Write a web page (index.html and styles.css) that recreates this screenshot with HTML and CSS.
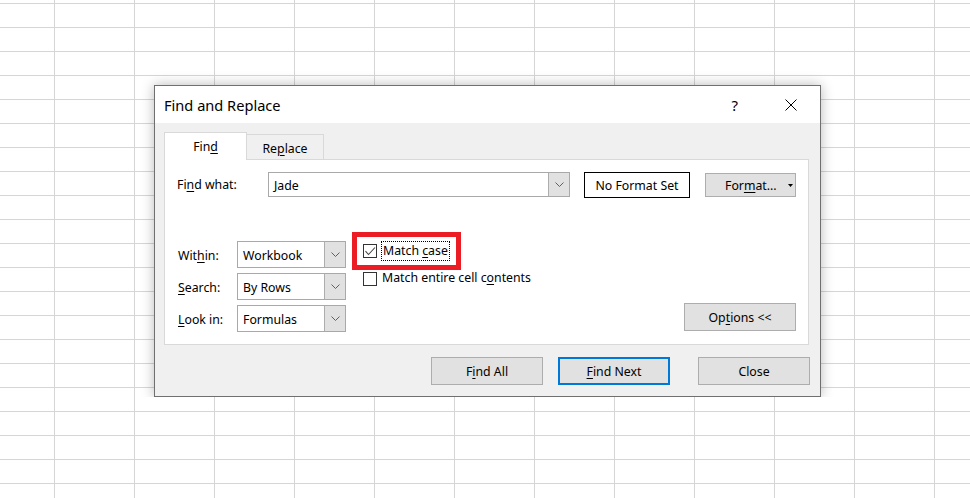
FILE: index.html
```html
<!DOCTYPE html>
<html>
<head>
<meta charset="utf-8">
<link rel="stylesheet" href="styles.css">
</head>
<body>
<div class="dialog">
  <div class="titlebar">
    <span class="title">Find and Replace</span>
    <span class="help">?</span>
    <svg class="close-x" width="12" height="12" viewBox="0 0 12 12"><path d="M0.5 0.5 L11.5 11.5 M11.5 0.5 L0.5 11.5" stroke="#000" stroke-width="1" fill="none"/></svg>
  </div>
  <div class="body">
    <div class="tabs">
      <div class="tab active"><span>Fin<u>d</u></span></div>
      <div class="tab"><span>Re<u>p</u>lace</span></div>
    </div>
    <div class="panel">
      <div class="row-find">
        <label class="lbl-find"><span>Fi<u>n</u>d what:</span></label>
        <div class="combo combo-find">
          <span class="combo-text">Jade</span>
          <span class="combo-arrow"><svg width="9" height="5" viewBox="0 0 9 5"><polyline points="0.5,0.5 4.5,4.5 8.5,0.5" stroke="#606060" fill="none"/></svg></span>
        </div>
        <div class="noformat">No Format Set</div>
        <div class="btn btn-format"><span>For<u>m</u>at...</span><svg class="tri" width="5" height="3" viewBox="0 0 5 3"><polygon points="0,0 5,0 2.5,3" fill="#000"/></svg></div>
      </div>
      <div class="row-opts">
        <div class="selects">
          <div class="sel-row">
            <label class="lbl-sel">Wit<u>h</u>in:</label>
            <div class="combo combo-sel">
              <span class="combo-text">Workbook</span>
              <span class="combo-arrow"><svg width="9" height="5" viewBox="0 0 9 5"><polyline points="0.5,0.5 4.5,4.5 8.5,0.5" stroke="#606060" fill="none"/></svg></span>
            </div>
          </div>
          <div class="sel-row">
            <label class="lbl-sel"><u>S</u>earch:</label>
            <div class="combo combo-sel">
              <span class="combo-text">By Rows</span>
              <span class="combo-arrow"><svg width="9" height="5" viewBox="0 0 9 5"><polyline points="0.5,0.5 4.5,4.5 8.5,0.5" stroke="#606060" fill="none"/></svg></span>
            </div>
          </div>
          <div class="sel-row">
            <label class="lbl-sel"><u>L</u>ook in:</label>
            <div class="combo combo-sel">
              <span class="combo-text">Formulas</span>
              <span class="combo-arrow"><svg width="9" height="5" viewBox="0 0 9 5"><polyline points="0.5,0.5 4.5,4.5 8.5,0.5" stroke="#606060" fill="none"/></svg></span>
            </div>
          </div>
        </div>
        <div class="checks">
          <div class="highlight">
            <div class="check-row">
              <span class="box"><svg width="12" height="12" viewBox="0 0 12 12"><polyline points="1.5,6.2 4.5,9.5 11,2.5" stroke="#444" stroke-width="1.1" fill="none"/></svg></span>
              <span class="check-label focus">Match <u>c</u>ase</span>
            </div>
          </div>
          <div class="check-row second">
            <span class="box"></span>
            <span class="check-label">Match entire cell c<u>o</u>ntents</span>
          </div>
        </div>
        <div class="btn btn-options"><span>Op<u>t</u>ions &lt;&lt;</span></div>
      </div>
    </div>
    <div class="buttons">
      <div class="btn btn-main"><span>F<u>i</u>nd All</span></div>
      <div class="btn btn-main default"><span><u>F</u>ind Next</span></div>
      <div class="btn btn-main btn-close">Close</div>
    </div>
  </div>
</div>
</body>
</html>
```
FILE: styles.css
```css
html {
  background-color: #ffffff;
  background-image:
    linear-gradient(to right, #d6d6d6 1px, transparent 1px),
    linear-gradient(to bottom, #d6d6d6 1px, transparent 1px);
  background-size: 80px 100%, 100% 24px;
  background-position: 54px 0, 0 3px;
  min-height: 100%;
}
body {
  margin: 0;
  font-family: "Noto Sans", "Open Sans", sans-serif;
  font-size: 12.3px;
  color: #000;
  overflow: hidden;
}
u { text-decoration: underline; text-underline-offset: 2px; }

.dialog {
  box-sizing: border-box;
  width: 667px;
  height: 312px;
  margin: 85px 0 0 154px;
  border: 1px solid #6f6f6f;
  background: #f0f0f0;
  box-shadow: 0 0 12px rgba(0,0,0,0.28);
  display: flex;
  flex-direction: column;
}
.titlebar {
  height: 37px;
  background: #fff;
  display: flex;
  align-items: center;
  padding-left: 9px;
  padding-right: 23px;
  flex-shrink: 0;
}
.title { font-size: 14.6px; flex: 1; }
.help { font-size: 15px; margin-right: 47px; }
.close-x { display: block; }

.body {
  padding: 9px 11px 11px 9px;
}
.tabs {
  display: flex;
  align-items: flex-end;
  height: 27px;
}
.tab {
  box-sizing: border-box;
  height: 25px;
  width: 77px;
  border: 1px solid #d9d9d9;
  border-bottom: none;
  border-left: none;
  background: #f0f0f0;
  display: flex;
  align-items: center;
  justify-content: center;
  padding-top: 2px;
}
.tab.active {
  width: 83px;
  height: 28px;
  border-left: 1px solid #d9d9d9;
  background: #fff;
  margin-bottom: -1px;
  position: relative;
  z-index: 1;
  padding-top: 0;
}

.panel {
  box-sizing: border-box;
  height: 186px;
  background: #fff;
  border: 1px solid #d9d9d9;
  padding: 12px 12px 0 12px;
}
.row-find {
  display: flex;
  align-items: flex-start;
}
.lbl-find {
  width: 91px;
  height: 25px;
  display: flex;
  align-items: center;
}
.combo {
  box-sizing: border-box;
  display: flex;
  border: 1px solid #a9a9a9;
  background: #fff;
}
.combo-text {
  flex: 1;
  display: flex;
  align-items: center;
  padding-left: 5px;
  padding-top: 1px;
}
.combo-arrow {
  width: 20px;
  background: #e1e1e1;
  border-left: 1px solid #adadad;
  display: flex;
  align-items: center;
  justify-content: center;
}
.combo-find { width: 302px; height: 25px; }
.noformat {
  box-sizing: border-box;
  width: 106px;
  height: 26px;
  margin-left: 14px;
  border: 1px solid #000;
  display: flex;
  align-items: center;
  justify-content: center;
}
.btn {
  box-sizing: border-box;
  background: #e1e1e1;
  border: 1px solid #adadad;
  display: flex;
  align-items: center;
  justify-content: center;
}
.btn-format {
  width: 91px;
  height: 24px;
  margin-left: 15px;
  margin-top: 1px;
  justify-content: flex-start;
  padding-left: 19px;
}
.tri { margin-left: 11px; }

.row-opts {
  display: flex;
  align-items: flex-start;
  margin-top: 34px;
}
.selects {
  margin-top: 9px;
  display: flex;
  flex-direction: column;
  gap: 5px;
}
.sel-row { display: flex; align-items: center; }
.lbl-sel { width: 59px; padding-left: 1px; padding-top: 1px; }
.combo-sel { width: 109px; height: 27px; }

.checks { margin-left: 6px; }
.highlight {
  box-sizing: border-box;
  width: 109px;
  height: 38px;
  border: 5px solid #ec1c24;
  padding: 4px 0 0 6px;
}
.check-row { display: flex; align-items: center; }
.box {
  box-sizing: border-box;
  width: 14px;
  height: 14px;
  border: 1px solid #333;
  background: #fff;
  display: flex;
  align-items: center;
  justify-content: center;
  flex-shrink: 0;
}
.check-label { margin-left: 5px; }
.check-label.focus {
  display: inline-block;
  margin-left: 4px;
  height: 20px;
  line-height: 18px;
  box-sizing: border-box;
  border: 1px dotted #000;
  padding: 0 1px;
  white-space: pre;
}
.check-row.second {
  margin-top: 2px;
  margin-left: 11px;
  align-items: flex-start;
}
.check-row.second .check-label {
  line-height: 14px;
  margin-top: -1px;
}

.btn-options {
  width: 112px;
  height: 28px;
  margin-left: auto;
  margin-top: 71px;
}

.buttons {
  display: flex;
  justify-content: flex-end;
  margin-top: 12px;
  margin-right: -1px;
}
.btn-main { width: 112px; height: 28px; }
.btn-main.default { margin-left: 15px; border: 2px solid #0078d7; }
.btn-close { margin-left: 28px; }
```
